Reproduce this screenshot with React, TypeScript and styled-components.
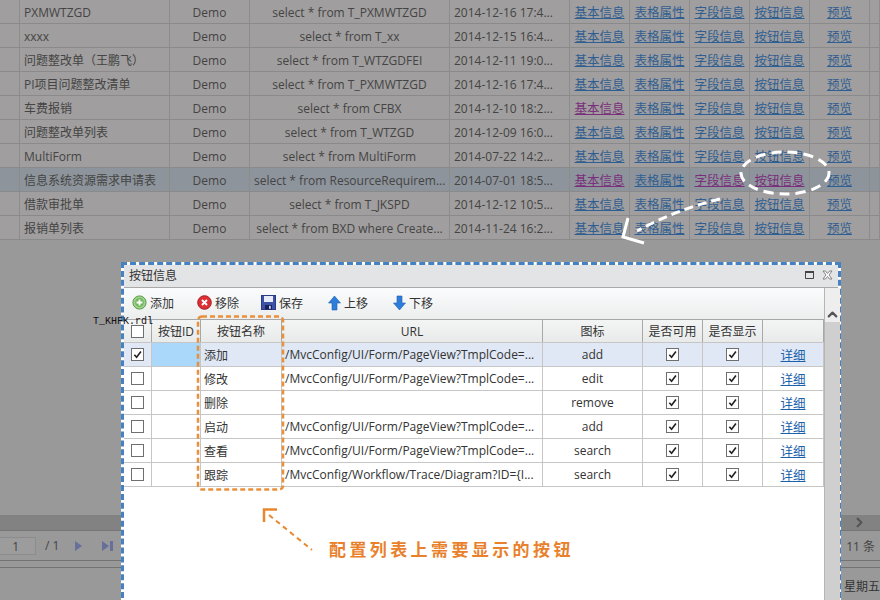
import React from "react";
import styled, { createGlobalStyle } from "styled-components";
import { ChevronRight, ChevronUp } from "lucide-react";

const GlobalStyle = createGlobalStyle`
  html, body {
    margin: 0;
    padding: 0;
    background: #999999;
    overflow: hidden;
  }
  body {
    font-family: "Open Sans", "Noto Sans CJK SC", sans-serif;
    font-size: 12px;
  }
`;

const Page = styled.div`
  position: relative;
  width: 880px;
  height: 600px;
  overflow: hidden;
`;

const ListGrid = styled.div`
  display: flex;
  flex-direction: column;
  height: 241px;
`;

const ListRow = styled.div<{ $selected?: boolean }>`
  display: grid;
  grid-template-columns: 20px 150px 80px 200px 120px repeat(5, 60px) 10px;
  height: 24px;
  box-sizing: border-box;
  border-bottom: 1px solid #8a8a8a;
  background: ${(p) => (p.$selected ? "#8e949b" : "#a09e9e")};
  color: #444;
`;

const ListCell = styled.div<{ $align?: string }>`
  box-sizing: border-box;
  border-right: 1px solid #8c8c8c;
  padding: 0 4px;
  line-height: 26px;
  white-space: nowrap;
  overflow: hidden;
  text-align: ${(p) => p.$align || "left"};
`;

const ListLink = styled.a<{ $visited?: boolean }>`
  font-size: 12.5px;
  text-decoration: underline;
  color: ${(p) => (p.$visited ? "#7a2f7c" : "#2f5f92")};
`;

const ScrollBand = styled.div`
  margin-top: 274px;
  height: 15px;
  background: #828282;
  border-bottom: 1px solid #757575;
  display: flex;
  justify-content: flex-end;
  align-items: center;
  padding-right: 13px;
  color: #555;
`;

const Pager = styled.div`
  height: 29px;
  display: flex;
  align-items: center;
  color: #444;
  border-bottom: 1px solid #727272;
`;

const PageInput = styled.div`
  box-sizing: border-box;
  width: 36px;
  height: 18px;
  margin-right: 9px;
  padding-right: 16px;
  text-align: right;
  line-height: 18px;
  background: #9c9c9c;
  border: 1px solid #8c8c8c;
  border-left: 0;
`;

const PagerArrows = styled.svg`
  margin-left: 16px;
  flex: none;
`;

const PagerTotal = styled.span`
  margin-left: auto;
  margin-right: 5px;
  white-space: nowrap;
`;

const StatusBar = styled.div`
  margin-top: 6px;
  border-top: 1px solid #727272;
  height: 36px;
  display: flex;
  justify-content: flex-end;
  align-items: center;
  color: #333;
  white-space: nowrap;
`;

const Dialog = styled.section`
  position: absolute;
  left: 121px;
  top: 262px;
  width: 720px;
  height: 345px;
  box-sizing: border-box;
  border: 3px dashed #4482c3;
  background: #fff;
  display: flex;
  flex-direction: column;
  color: #333;
`;

const TitleBar = styled.header`
  height: 23px;
  flex: none;
  box-sizing: border-box;
  background: #e3e4e5;
  border-bottom: 1px solid #a9a9a9;
  display: flex;
  align-items: center;
  padding: 0 5px 3px 5px;
  font-size: 12px;
  color: #333;
`;

const TitleText = styled.span`
  flex: 1;
`;

const TitleIcon = styled.svg`
  display: block;
  margin-left: 8px;
`;

const DialogBody = styled.div`
  flex: 1;
  display: flex;
  min-height: 0;
`;

const DialogMain = styled.div`
  width: 700px;
  flex: none;
`;

const Toolbar = styled.div`
  height: 31px;
  box-sizing: border-box;
  background: linear-gradient(#fbfcfd, #eceded);
  display: flex;
  align-items: center;
  padding: 0 0 2px 8px;
`;

const ToolButton = styled.span<{ $width: number }>`
  display: inline-flex;
  align-items: center;
  width: ${(p) => p.$width}px;
  flex: none;
  gap: 3px;
  color: #333;
`;

const DataGrid = styled.div`
  display: flex;
  flex-direction: column;
`;

const DataRow = styled.div<{ $kind?: "head" | "selected" }>`
  display: grid;
  grid-template-columns: 28px 49px 81px 261px 100px 60px 60px 61px;
  height: 24px;
  box-sizing: border-box;
  border-bottom: 1px solid #c6c6c6;
  background: ${(p) =>
    p.$kind === "head"
      ? "linear-gradient(#f3f4f4, #e9eaea)"
      : p.$kind === "selected"
      ? "#e0e8f5"
      : "#fff"};
  border-top: ${(p) => (p.$kind === "head" ? "1px solid #a8a8a8" : "0")};
`;

const DataCell = styled.div<{ $align?: string; $active?: boolean; $head?: boolean }>`
  box-sizing: border-box;
  border-right: 1px solid ${(p) => (p.$head ? "#a8a8a8" : "#c6c6c6")};
  display: flex;
  align-items: center;
  justify-content: ${(p) => p.$align || "center"};
  padding: 0 ${(p) => (p.$align === "flex-start" ? "3px" : "0")};
  white-space: nowrap;
  overflow: hidden;
  color: #333;
  background: ${(p) => (p.$active ? "#a9d8fb" : "transparent")};
`;

const Check = styled.span<{ $large?: boolean }>`
  display: flex;
  align-items: center;
  justify-content: center;
  box-sizing: border-box;
  width: 13px;
  height: 13px;
  border: 1px solid #6f6f6f;
  background: #fff;
`;

const DetailLink = styled.a`
  color: #1b62ad;
  font-size: 12.5px;
  text-decoration: underline;
`;

const DialogScroll = styled.div`
  flex: 1;
  border-left: 1px solid #b5b5b5;
  background: #cfcfcf;
  display: flex;
  flex-direction: column;
`;

const ScrollUp = styled.div`
  height: 34px;
  background: #eeeeee;
  display: flex;
  align-items: flex-end;
  justify-content: center;
  color: #555;
`;

const FileTag = styled.span`
  position: absolute;
  left: 93px;
  top: 316px;
  font-family: "Liberation Mono", monospace;
  font-size: 10px;
  line-height: 12px;
  color: #111;
`;

const Overlay = styled.svg`
  position: absolute;
  left: 0;
  top: 0;
  pointer-events: none;
`;

const Note = styled.span`
  position: absolute;
  left: 329px;
  top: 537px;
  font-family: "Noto Sans CJK SC", sans-serif;
  font-weight: 700;
  font-size: 17px;
  line-height: 24px;
  letter-spacing: 3.4px;
  white-space: nowrap;
  color: #e9812c;
`;

const listRows = [
  ["PXMWTZGD", "select * from T_PXMWTZGD", "2014-12-16 17:4..."],
  ["xxxx", "select * from T_xx", "2014-12-15 16:4..."],
  ["问题整改单（王鹏飞）", "select * from T_WTZGDFEI", "2014-12-11 19:0..."],
  ["PI项目问题整改清单", "select * from T_PXMWTZGD", "2014-12-16 17:4..."],
  ["车费报销", "select * from CFBX", "2014-12-10 18:2..."],
  ["问题整改单列表", "select * from T_WTZGD", "2014-12-09 16:0..."],
  ["MultiForm", "select * from MultiForm", "2014-07-22 14:2..."],
  ["信息系统资源需求申请表", "select * from ResourceRequirem...", "2014-07-01 18:5..."],
  ["借款审批单", "select * from T_JKSPD", "2014-12-12 10:5..."],
  ["报销单列表", "select * from BXD where Create...", "2014-11-24 16:2..."],
];

const linkNames = ["基本信息", "表格属性", "字段信息", "按钮信息", "预览"];

// row index -> link columns already clicked
const visitedLinks: Record<number, number[]> = {
  4: [0],
  7: [0, 2, 3],
};

const formUrl = "/MvcConfig/UI/Form/PageView?TmplCode=...";

const buttonRows = [
  { name: "添加", url: formUrl, icon: "add" },
  { name: "修改", url: formUrl, icon: "edit" },
  { name: "删除", url: "", icon: "remove" },
  { name: "启动", url: formUrl, icon: "add" },
  { name: "查看", url: formUrl, icon: "search" },
  { name: "跟踪", url: "/MvcConfig/Workflow/Trace/Diagram?ID={I...", icon: "search" },
];

const headers = ["按钮ID", "按钮名称", "URL", "图标", "是否可用", "是否显示", ""];

const Tick = () => (
  <svg width="9" height="9" viewBox="0 0 10 10">
    <path d="M1.5 5.2 L4 8 L8.8 1.6" fill="none" stroke="#222" strokeWidth="1.8" />
  </svg>
);

const AddIcon = () => (
  <svg width="15" height="15" viewBox="0 0 15 15">
    <circle cx="7.5" cy="7.5" r="6.6" fill="#9fd08d" stroke="#5d9c4d" />
    <circle cx="7.5" cy="7.5" r="4.4" fill="#6fb75c" />
    <path d="M7.5 4.5v6M4.5 7.5h6" stroke="#fff" strokeWidth="1.8" />
  </svg>
);

const RemoveIcon = () => (
  <svg width="15" height="15" viewBox="0 0 15 15">
    <circle cx="7.5" cy="7.5" r="6.8" fill="#dd2f36" stroke="#a81e24" />
    <path d="M5 5l5 5M10 5l-5 5" stroke="#fff" strokeWidth="1.9" />
  </svg>
);

const SaveIcon = () => (
  <svg width="15" height="15" viewBox="0 0 15 15">
    <rect x="0.5" y="0.5" width="14" height="14" fill="#3e51a8" stroke="#2a3a85" />
    <rect x="3" y="1" width="9" height="6" fill="#e8ecf8" />
    <rect x="4" y="10" width="7" height="4.5" fill="#16215c" />
    <rect x="8" y="10.8" width="1.8" height="3" fill="#c9d1ee" />
  </svg>
);

const ArrowIcon = ({ down }: { down?: boolean }) => (
  <svg width="13" height="16" viewBox="0 0 13 16">
    <path
      d={down ? "M4 1h5v7h3.500L6.500 15 .5 8H4z" : "M4 15h5V8h3.500L6.500 1 .5 8H4z"}
      fill="#2e7ddb"
      stroke="#1f5fb0"
      strokeWidth="0.6"
    />
  </svg>
);

const tools = [
  { label: "添加", icon: <AddIcon />, width: 65 },
  { label: "移除", icon: <RemoveIcon />, width: 64 },
  { label: "保存", icon: <SaveIcon />, width: 67 },
  { label: "上移", icon: <ArrowIcon />, width: 65 },
  { label: "下移", icon: <ArrowIcon down />, width: 65 },
];

const App = () => {
  return (
    <Page>
      <GlobalStyle />
      <ListGrid>
        {listRows.map((row, i) => (
          <ListRow key={i} $selected={i === 7}>
            <ListCell />
            <ListCell>{row[0]}</ListCell>
            <ListCell $align="center">Demo</ListCell>
            <ListCell $align="center">{row[1]}</ListCell>
            <ListCell>{row[2]}</ListCell>
            {linkNames.map((name, j) => (
              <ListCell key={name} $align="center">
                <ListLink $visited={(visitedLinks[i] || []).includes(j)}>{name}</ListLink>
              </ListCell>
            ))}
            <ListCell />
          </ListRow>
        ))}
      </ListGrid>

      <ScrollBand>
        <ChevronRight size={15} strokeWidth={3.5} />
      </ScrollBand>
      <Pager>
        <PageInput>1</PageInput>
        <span>/ 1</span>
        <PagerArrows width="44" height="12" viewBox="0 0 44 12">
          <path d="M0 1l7 5-7 5z" fill="#66709a" />
          <path d="M27 1l7 5-7 5zM35 1h3v10h-3z" fill="#66709a" />
        </PagerArrows>
        <PagerTotal>11 条</PagerTotal>
      </Pager>
      <StatusBar>星期五</StatusBar>

      <Dialog>
        <TitleBar>
          <TitleText>按钮信息</TitleText>
          <TitleIcon width="9" height="8" viewBox="0 0 9 8">
            <path d="M.5 1.500h8v6h-8z" fill="none" stroke="#444" />
            <path d="M0 1h9" stroke="#444" strokeWidth="2" />
          </TitleIcon>
          <TitleIcon width="11" height="10" viewBox="0 0 11 10">
            <path
              d="M1 1h2.500L5.500 3.500 7.500 1H10L7 5l3 4H7.500L5.500 6.500 3.500 9H1l3-4z"
              fill="#fff"
              stroke="#777"
              strokeWidth="0.9"
            />
          </TitleIcon>
        </TitleBar>
        <DialogBody>
          <DialogMain>
            <Toolbar>
              {tools.map((tool) => (
                <ToolButton key={tool.label} $width={tool.width}>
                  {tool.icon}
                  {tool.label}
                </ToolButton>
              ))}
            </Toolbar>
            <DataGrid>
              <DataRow $kind="head">
                <DataCell $head>
                  <Check />
                </DataCell>
                {headers.map((h, i) => (
                  <DataCell key={i} $head>
                    {h}
                  </DataCell>
                ))}
              </DataRow>
              {buttonRows.map((row, i) => (
                <DataRow key={i} $kind={i === 0 ? "selected" : undefined}>
                  <DataCell>
                    <Check>{i === 0 && <Tick />}</Check>
                  </DataCell>
                  <DataCell $active={i === 0} />
                  <DataCell $align="flex-start">{row.name}</DataCell>
                  <DataCell $align="flex-start">{row.url}</DataCell>
                  <DataCell>{row.icon}</DataCell>
                  <DataCell>
                    <Check>
                      <Tick />
                    </Check>
                  </DataCell>
                  <DataCell>
                    <Check>
                      <Tick />
                    </Check>
                  </DataCell>
                  <DataCell>
                    <DetailLink>详细</DetailLink>
                  </DataCell>
                </DataRow>
              ))}
            </DataGrid>
          </DialogMain>
          <DialogScroll>
            <ScrollUp>
              <ChevronUp size={15} strokeWidth={3.5} />
            </ScrollUp>
          </DialogScroll>
        </DialogBody>
      </Dialog>

      <FileTag>T_KHFK.rdl</FileTag>
      <Note>配置列表上需要显示的按钮</Note>

      <Overlay width="880" height="600" viewBox="0 0 880 600">
        {/* white marks on the list */}
        <ellipse
          cx="785"
          cy="173"
          rx="44"
          ry="21"
          fill="none"
          stroke="#fff"
          strokeWidth="3"
          strokeDasharray="10 6"
        />
        <path
          d="M720 199 Q675 210 637 231"
          fill="none"
          stroke="#fff"
          strokeWidth="3"
          strokeDasharray="9 5"
        />
        <path d="M628 218 L623 237 L644 243" fill="none" stroke="#fff" strokeWidth="3" />
        {/* orange marks on the dialog */}
        <rect
          x="198"
          y="316.500"
          width="85"
          height="173"
          rx="4"
          fill="none"
          stroke="#e8913c"
          strokeWidth="2.500"
          strokeDasharray="5 3"
        />
        <path
          d="M269 515 L312 550"
          fill="none"
          stroke="#e9872f"
          strokeWidth="2"
          strokeDasharray="5 4"
        />
        <path d="M277 509.500 H264 V522" fill="none" stroke="#e9872f" strokeWidth="2.500" />
      </Overlay>
    </Page>
  );
};

export default App;
